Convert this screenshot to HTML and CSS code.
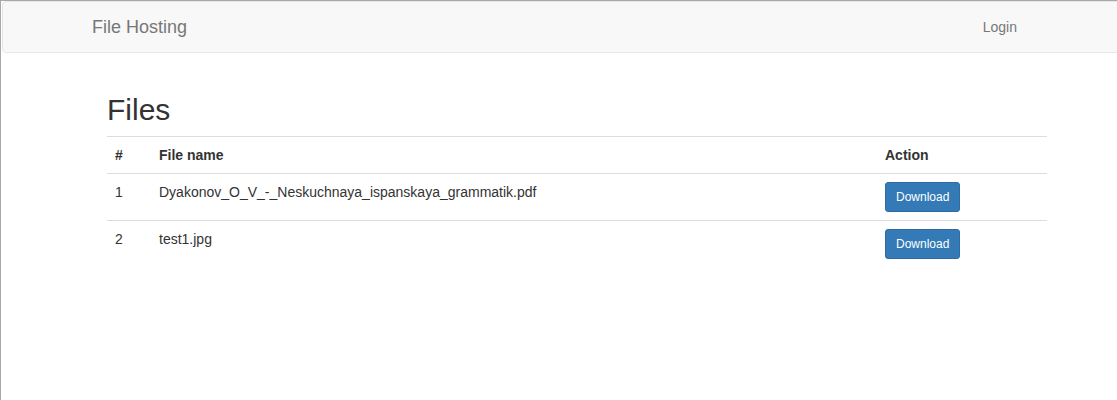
FILE: index.html
```html
<!DOCTYPE html>
<html lang="en">
<head>
<meta charset="utf-8">
<title>File Hosting</title>
<link rel="stylesheet" href="styles.css">
</head>
<body>
<div class="frame">
  <nav class="navbar">
    <div class="navbar-inner">
      <a class="brand" href="#">File Hosting</a>
      <a class="nav-link" href="#">Login</a>
    </div>
  </nav>
  <main class="container">
    <h2 class="title">Files</h2>
    <table class="table">
      <colgroup>
        <col class="col-num">
        <col class="col-name">
        <col class="col-action">
      </colgroup>
      <tbody>
        <tr>
          <th>#</th>
          <th>File name</th>
          <th>Action</th>
        </tr>
        <tr>
          <td>1</td>
          <td>Dyakonov_O_V_-_Neskuchnaya_ispanskaya_grammatik.pdf</td>
          <td><button class="btn" type="button">Download</button></td>
        </tr>
        <tr>
          <td>2</td>
          <td>test1.jpg</td>
          <td><button class="btn" type="button">Download</button></td>
        </tr>
      </tbody>
    </table>
  </main>
</div>
</body>
</html>
```

FILE: styles.css
```css
html, body {
  margin: 0;
  padding: 0;
  background: #fff;
}

body {
  font-family: "Liberation Sans", Arial, Helvetica, sans-serif;
  font-size: 14px;
  line-height: 20px;
  color: #333;
}

.frame {
  height: 100vh;
  box-sizing: border-box;
  border-top: 1px solid #a8a8a8;
  border-left: 1px solid #a8a8a8;
  overflow: hidden;
}

.navbar {
  margin-left: 1px;
  width: 1130px;
  box-sizing: border-box;
  min-height: 52px;
  background: #f8f8f8;
  border: 1px solid #e7e7e7;
  border-radius: 4px;
  margin-bottom: 20px;
}

.navbar-inner {
  display: flex;
  align-items: flex-start;
  padding-left: 74px;
}

.brand {
  display: block;
  padding: 15px;
  font-size: 18px;
  line-height: 20px;
  color: #777;
  text-decoration: none;
}

.nav-link {
  display: block;
  margin-left: auto;
  margin-right: 99px;
  padding: 15px;
  font-size: 14px;
  line-height: 20px;
  color: #777;
  text-decoration: none;
}

.container {
  display: flow-root;
  margin-left: 106px;
  width: 940px;
}

.title {
  margin: 20px 0 10px;
  font-size: 30px;
  font-weight: 500;
  line-height: 33px;
  color: #333;
}

.table {
  width: 100%;
  border-collapse: collapse;
  border-spacing: 0;
}

.col-num { width: 44px; }
.col-name { width: 726px; }
.col-action { width: 170px; }

.table th,
.table td {
  padding: 8px;
  line-height: 20px;
  text-align: left;
  vertical-align: top;
  border-top: 1px solid #ddd;
}

.table th {
  font-weight: bold;
}

.btn {
  display: inline-block;
  margin: 0;
  padding: 5px 10px;
  font-family: "Liberation Sans", Arial, Helvetica, sans-serif;
  font-size: 12px;
  line-height: 18px;
  color: #fff;
  background: #337ab7;
  border: 1px solid #2e6da4;
  border-radius: 3px;
  cursor: pointer;
}
```
